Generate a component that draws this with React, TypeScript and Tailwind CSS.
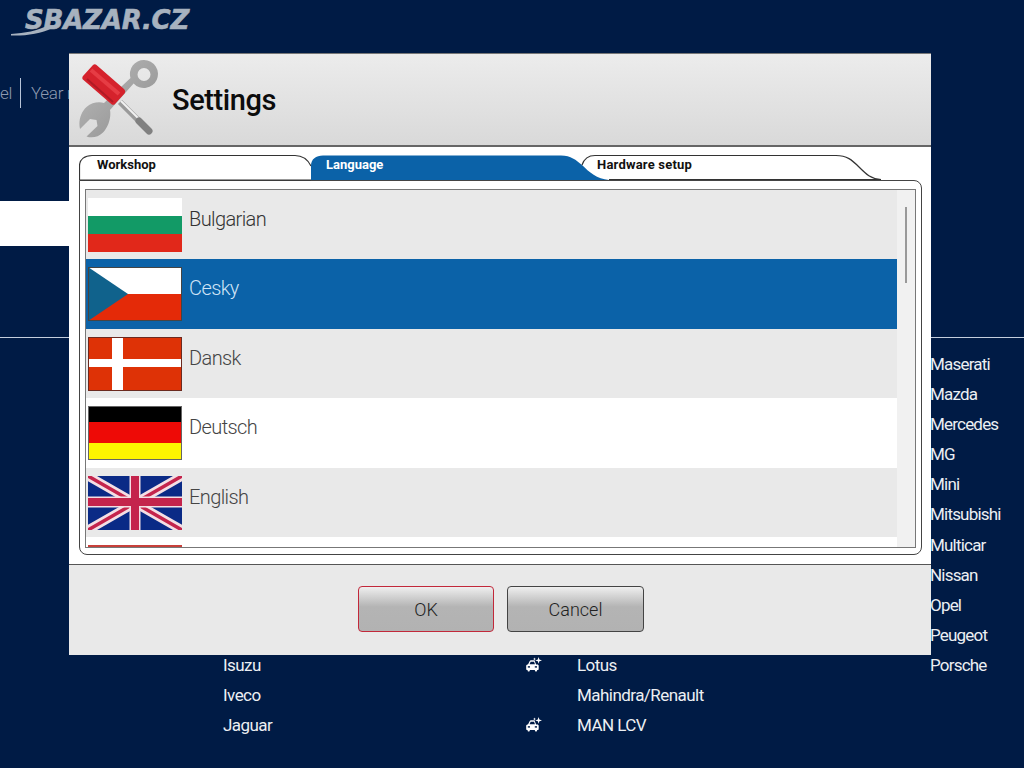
const col1 = ["", "", "", "", "", "", "", "", "", "", "Isuzu", "Iveco", "Jaguar"];
const col2 = ["", "", "", "", "", "", "", "", "", "", "Lotus", "Mahindra/Renault", "MAN LCV"];
const col3 = ["Maserati", "Mazda", "Mercedes", "MG", "Mini", "Mitsubishi", "Multicar", "Nissan", "Opel", "Peugeot", "Porsche", "", ""];
const withCar = [false, false, false, false, false, false, false, false, false, false, true, false, true];

function CarIcon() {
  return (
    <svg width="18" height="16" viewBox="0 0 18 16" fill="#fff">
      <path d="M3 7.5 4.6 4.2C4.9 3.6 5.4 3.3 6 3.3h3.5l1.6 4.2h1.2c.9 0 1.4.6 1.4 1.4v3.3c0 .5-.3.8-.8.8h-.8v.7c0 .5-.3.8-.8.8h-.6c-.5 0-.8-.3-.8-.8v-.7H4.8v.7c0 .5-.3.8-.8.8h-.6c-.5 0-.8-.3-.8-.8v-.7h-.6c-.5 0-.8-.3-.8-.8V8.900c0-.8.6-1.400 1.600-1.400Z" />
      <path d="M4.600 7.300 5.600 4.800H9L10 7.300Z" fill="#001b45" />
      <rect x="2.800" y="9.200" width="2.200" height="1.400" fill="#001b45" />
      <rect x="9.800" y="9.200" width="2.200" height="1.400" fill="#001b45" />
      <path d="M13.600 0l.8 2.600 2.600.8-2.600.8-.8 2.600-.8-2.600-2.600-.8 2.600-.8Z" />
      <path d="M9.500 .6l.4 1 1 .4-1 .4-.4 1-.4-1-1-.4 1-.4Z" />
    </svg>
  );
}

function ToolsIcon() {
  return (
    <svg width="84" height="84" viewBox="0 0 84 84" className="shrink-0">
      <defs>
        <linearGradient id="steel" x1="0" y1="0" x2="1" y2="1">
          <stop offset="0" stopColor="#bcbcbc" />
          <stop offset="1" stopColor="#8c8c8c" />
        </linearGradient>
      </defs>
      <path
        fill="url(#steel)"
        fillRule="evenodd"
        d="M67 1a14 14 0 1 1-10.400 23.400L33 51c1.400 7-1.600 17-7 22.500-4.400 4.500-11 6-16.500 4l11-10.500-1-6-6.500-1L3 70C1 62 4 53 9.500 48c5.500-4.500 12-5.500 17.500-4L53.500 19A14 14 0 0 1 67 1Zm0 8a6.500 6.500 0 1 0 0 13 6.500 6.500 0 0 0 0-13Z"
      />
      <path d="M43 43 66 66" stroke="#9a9a9a" strokeWidth="6" />
      <path d="M44 42 65 63" stroke="#f2f2f2" strokeWidth="2" />
      <path d="M62 62 72 72" stroke="#808080" strokeWidth="7" strokeLinecap="round" />
      <path d="M6 17 16 6c1-1 2.500-1 3.500 0L47 30c1.500 1.500 1.500 3 .5 4.500L38 45c-1 1-2.500 1.200-3.500.2L6.500 21C5 20 5 18.500 6 17Z" fill="#d5222c" />
      <path d="M14 11 42 35" stroke="#e63c44" strokeWidth="4" />
      <path d="M10 20 36 43" stroke="#b01a25" strokeWidth="2" />
    </svg>
  );
}

function TabOutline() {
  return (
    <svg width="810" height="27" viewBox="0 0 810 27" className="absolute left-0 top-0">
      <path d="M0.500 26V12C0.500 5 6 1.500 13 1.500H216C224 1.500 229 6 232 12" fill="#fff" stroke="#333" strokeWidth="1.200" />
      <path d="M232 26V12C232 5 237 1.500 244 1.500H482C492 1.500 497 6 503 11 510 18 518 25 530 26Z" fill="#0b62a8" />
      <path d="M503 11C505 5 510 1.500 516 1.500H757C768 1.500 773 6 780 13 787 20 792 25 802 25.500" fill="#fff" stroke="#333" strokeWidth="1.200" />
      <path d="M0 26H232M530 25.500H802" stroke="#333" strokeWidth="1.200" fill="none" />
    </svg>
  );
}

function FlagBG() {
  return (
    <svg width="94" height="54" viewBox="0 0 94 54">
      <rect width="94" height="18" fill="#ffffff" />
      <rect y="18" width="94" height="18" fill="#129a66" />
      <rect y="36" width="94" height="18" fill="#e1281a" />
    </svg>
  );
}

function FlagCZ() {
  return (
    <svg width="94" height="54" viewBox="0 0 94 54">
      <rect width="94" height="27" fill="#ffffff" />
      <rect y="27" width="94" height="27" fill="#e42a08" />
      <path d="M0 0 40 27 0 54Z" fill="#10628c" />
      <rect x=".5" y=".5" width="93" height="53" fill="none" stroke="#444" />
    </svg>
  );
}

function FlagDK() {
  return (
    <svg width="94" height="54" viewBox="0 0 94 54">
      <rect width="94" height="54" fill="#de3206" />
      <rect x="24" width="11" height="54" fill="#fff" />
      <rect y="22" width="94" height="8" fill="#fff" />
      <rect x=".5" y=".5" width="93" height="53" fill="none" stroke="#6b2a20" />
    </svg>
  );
}

function FlagDE() {
  return (
    <svg width="94" height="54" viewBox="0 0 94 54">
      <rect width="94" height="16" fill="#000" />
      <rect y="16" width="94" height="21" fill="#ee0a06" />
      <rect y="37" width="94" height="17" fill="#fdf400" />
      <rect x=".5" y=".5" width="93" height="53" fill="none" stroke="#666" />
    </svg>
  );
}

function FlagGB() {
  return (
    <svg width="94" height="54" viewBox="0 0 94 54">
      <rect width="94" height="54" fill="#0a2a86" />
      <path d="M0 0 94 54M94 0 0 54" stroke="#f4dfe4" strokeWidth="9" />
      <path d="M0 0 94 54M94 0 0 54" stroke="#c4244c" strokeWidth="3.500" />
      <path d="M47 0V54M0 26H94" stroke="#f4dfe4" strokeWidth="11" />
      <path d="M47 0V54M0 26H94" stroke="#c4244c" strokeWidth="8" />
    </svg>
  );
}

const languages = [
  { name: "Bulgarian", flag: <FlagBG />, bg: "bg-[#e9e9e9]", text: "text-[#333]" },
  { name: "Cesky", flag: <FlagCZ />, bg: "bg-[#0b62a8]", text: "text-[#cfe4f7]" },
  { name: "Dansk", flag: <FlagDK />, bg: "bg-[#e9e9e9]", text: "text-[#444]" },
  { name: "Deutsch", flag: <FlagDE />, bg: "bg-white", text: "text-[#444]" },
  { name: "English", flag: <FlagGB />, bg: "bg-[#e9e9e9]", text: "text-[#444]" },
];

function Logo() {
  return (
    <div className="relative h-[40px] pl-[25px] pt-[5px]">
      <span className="block text-[26px] leading-[30px] font-bold italic tracking-[-0.2px] text-[#a7b2bf] [-webkit-text-stroke:0.6px_#a7b2bf] [font-family:'DejaVu_Sans',sans-serif]">
        SBAZAR.CZ
      </span>
      <svg width="60" height="12" viewBox="0 0 60 12" className="absolute left-[11px] top-[24px]">
        <path d="M0 10C14 9 26 7 38 1l3 3C30 10 14 12 0 11.500Z" fill="#a7b2bf" />
      </svg>
    </div>
  );
}

function Dialog() {
  return (
    <div className="absolute left-[69px] top-[53px] flex h-[602px] w-[862px] flex-col border-t border-[#777] bg-white [font-family:Roboto,sans-serif]">
      <div className="flex h-[93px] items-center gap-[11px] border-b-2 border-[#666] bg-gradient-to-b from-[#ececec] to-[#d9d9d9] pl-[8px] pt-[2px]">
        <ToolsIcon />
        <h1 className="text-[29px] font-medium tracking-[-0.4px] text-[#0c0c0c]">Settings</h1>
      </div>

      <div className="flex h-[418px] flex-col border-b border-[#555] pl-[10px] pr-[9px] pt-[7px]">
        <div className="relative z-10 flex h-[27px] text-[13px] font-bold leading-[22px] text-[#111]">
          <TabOutline />
          <span className="relative ml-[18px] w-[229px]">Workshop</span>
          <span className="relative w-[271px] text-white">Language</span>
          <span className="relative tracking-[0.2px]">Hardware setup</span>
        </div>
        <div className="-mt-[1px] h-[375px] rounded-b-lg rounded-tr-lg border border-[#444] px-[5px] pb-[6px] pt-[8px]">
          <div className="flex h-[359px] overflow-hidden border border-[#777] bg-[#f1f1f1]">
            <div className="w-[811px] shrink-0 overflow-hidden">
              {languages.map((l) => (
                <div key={l.name} className={`flex h-[69.4px] pl-[2px] pt-[8px] ${l.bg}`}>
                  {l.flag}
                  <span className={`ml-[7px] mt-[8px] text-[20px] font-light leading-[26px] tracking-[-0.6px] ${l.text}`}>
                    {l.name}
                  </span>
                </div>
              ))}
              <div className="h-[12px] bg-white pl-[2px] pt-[8px]">
                <div className="h-[3px] w-[94px] bg-[#c8403a]" />
              </div>
            </div>
            <div className="flex flex-1 justify-center pt-[17px]">
              <div className="h-[76px] w-[2px] bg-[#999]" />
            </div>
          </div>
        </div>
      </div>

      <div className="flex flex-1 items-center justify-center gap-[13px] bg-[#e9e9e9] pb-[2px] pl-[2px] text-[18px] font-light text-[#222]">
        <button className="h-[46px] w-[136px] rounded-[4px] border-[1.5px] border-[#c2283a] bg-gradient-to-b from-[#efefef] via-[#b4b4b4] via-45% to-[#b2b2b2]">
          OK
        </button>
        <button className="h-[46px] w-[137px] rounded-[4px] border border-[#444] bg-gradient-to-b from-[#efefef] via-[#b4b4b4] via-45% to-[#b2b2b2]">
          Cancel
        </button>
      </div>
    </div>
  );
}

export default function App() {
  return (
    <div className="relative h-[768px] w-[1024px] overflow-hidden bg-[#001b45] [font-family:Roboto,sans-serif]">
      <Logo />

      <div className="mt-[38px] flex h-[30px] items-center text-[17px] font-light tracking-[-0.3px] text-[#8d9ab0]">
        <span className="w-[20px] pr-[8px] pt-[1px] text-right">el</span>
        <span className="h-[30px] w-px bg-[#b8c4d8]" />
        <span className="ml-[10px] whitespace-nowrap pt-[1px]">Year r</span>
      </div>

      <div className="mt-[93px] h-[45px] w-[400px] bg-white" />

      <div className="mt-[91px] h-px bg-[#c4cedd]" />

      <div className="mt-[11px] grid grid-cols-[302px_52px_353px_auto] pl-[223px] text-[17px] leading-[30.1px] tracking-[-0.55px] text-[#eceff3]">
        {col1.map((name, i) => (
          <div key={i} className="contents">
            <div className="h-[30.1px]">{name}</div>
            <div className="flex h-[30.1px] items-center">{withCar[i] && <CarIcon />}</div>
            <div className="h-[30.1px]">{col2[i]}</div>
            <div className="h-[30.1px] tracking-[-0.8px]">{col3[i]}</div>
          </div>
        ))}
      </div>

      <Dialog />
    </div>
  );
}
